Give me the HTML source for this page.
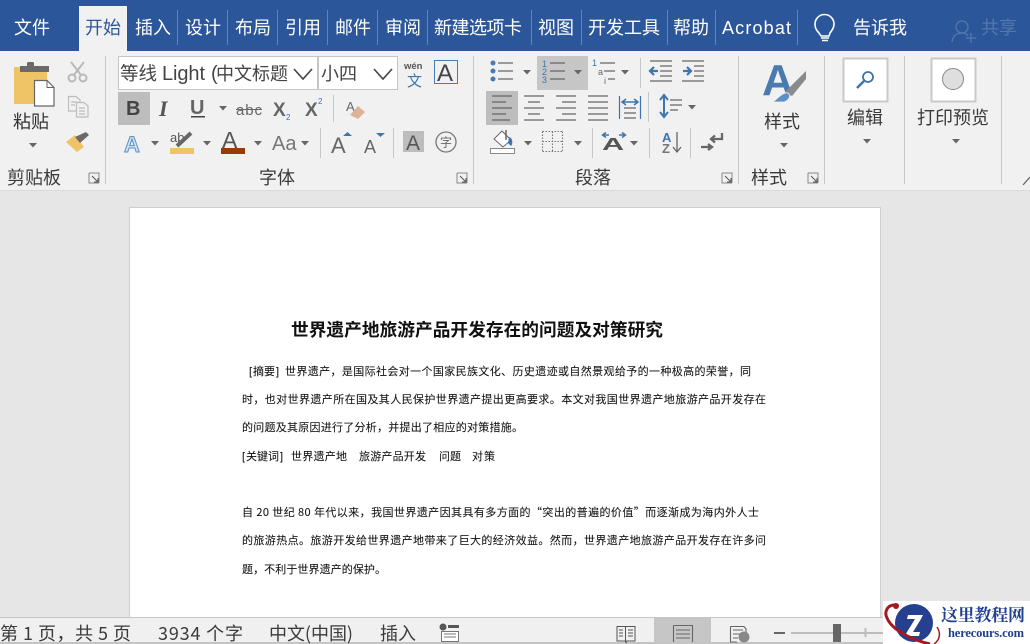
<!DOCTYPE html>
<html lang="zh"><head><meta charset="utf-8"><title>Word</title>
<style>
html,body{margin:0;padding:0;width:1030px;height:644px;overflow:hidden;background:#e6e6e6}
svg{display:block}
text{font-family:"Liberation Sans","Noto Sans CJK SC",sans-serif}
.c{font-family:"Noto Sans CJK SC","Liberation Sans",sans-serif}
.s{font-family:"Liberation Serif","Noto Serif CJK SC",serif;font-weight:700}
.t{fill:#fff;font-size:18px}
.r{fill:#3a3a3a;font-size:18px}
.d{fill:#111;font-size:11px;stroke:#111;stroke-width:.07}
.l{stroke:#666;stroke-width:1.2;fill:none}
.sep{stroke:#c6c6c6;stroke-width:1}
.tsep{stroke:#5f84b8;stroke-width:1}
</style></head><body>
<svg width="1030" height="644" viewBox="0 0 1030 644" xmlns="http://www.w3.org/2000/svg">
<defs>
<path id="ar" d="M-4-2H4L0 2.500Z" fill="#666"/>
<g id="lau"><path d="M0 0H10V10M0 0V10H10" fill="none" stroke="#888" stroke-width="1"/><path d="M3 3L9 9M9 5V9H5" fill="none" stroke="#555" stroke-width="1"/></g>
</defs>
<rect width="1030" height="644" fill="#e6e6e6"/>
<rect width="1030" height="51" fill="#2b579a"/>
<rect y="51" width="1030" height="139" fill="#f1f1f1"/>
<rect y="190" width="1030" height="1" fill="#dadada"/>

<!-- tabs -->
<rect x="79" y="6" width="48" height="45" fill="#f1f1f1"/>
<path class="tsep" d="M177.500 10V45M227.500 10V45M277.500 10V45M327.500 10V45M377.500 10V45M427.500 10V45M531.500 10V45M581.500 10V45M667.500 10V45M715.500 10V45M797.500 10V45"/>
<text class="t c" x="14" y="34">文件</text>
<text class="c" x="85" y="34" font-size="18" fill="#2b579a">开始</text>
<text class="t c" x="135" y="34">插入</text>
<text class="t c" x="185" y="34">设计</text>
<text class="t c" x="235" y="34">布局</text>
<text class="t c" x="285" y="34">引用</text>
<text class="t c" x="335" y="34">邮件</text>
<text class="t c" x="385" y="34">审阅</text>
<text class="t c" x="434" y="34" textLength="88">新建选项卡</text>
<text class="t c" x="538" y="34">视图</text>
<text class="t c" x="588" y="34">开发工具</text>
<text class="t c" x="673" y="34">帮助</text>
<text class="t" x="722" y="34" textLength="69">Acrobat</text>
<text class="t c" x="853" y="34">告诉我</text>
<text class="c" x="981" y="34" font-size="18" fill="#5478ad">共享</text>
<path d="M819 33C815 29 815 26 815 24A9.500 9.500 0 0 1 834 24C834 27 833 29 830 33L829 36H821Z" fill="none" stroke="#fff" stroke-width="1.600"/>
<path d="M821 38H829M822 40.500H828" stroke="#fff" stroke-width="1.600"/>
<g fill="none" stroke="#5478ad" stroke-width="1.300"><circle cx="962" cy="27" r="6"/><path d="M952 42C953 35 957 33 962 33C965 33 967 34 968 36M966 38H976M971 33V43"/></g>

<!-- group separators -->
<path class="sep" d="M105.500 56V184M473.500 56V184M738.500 56V184M824.500 56V184M904.500 56V184M1001.500 56V184M333.500 95V122M320.500 128V158M393.500 128V158M640.500 58V88M648.500 92V122M592.500 128V158M649.500 128V158M690.500 128V158"/>

<!-- clipboard -->
<rect x="14" y="67" width="33" height="37" fill="#efc467"/>
<rect x="20" y="66" width="29" height="6" fill="#6a6a6a"/>
<rect x="27" y="62" width="7" height="5" rx="1.500" fill="#6a6a6a"/>
<path d="M34.500 80.500H47L54 87.500V106H34.500Z" fill="#fff" stroke="#666" stroke-width="1.200"/>
<path d="M47 80.500V87.500H54" fill="none" stroke="#666" stroke-width="1"/>
<text class="c" x="13" y="128" font-size="18" fill="#333">粘贴</text>
<use href="#ar" x="33" y="145"/>
<!-- scissors -->
<g fill="none" stroke="#b9b9b9" stroke-width="2"><circle cx="72" cy="78" r="3.500"/><circle cx="83" cy="78" r="3.500"/><path d="M74 75L84 62M81 75L71 62"/></g>
<!-- copy -->
<g fill="#f1f1f1" stroke="#bdbdbd" stroke-width="1.200"><path d="M68.500 96.500H76L80 100V111H68.500Z"/><path d="M76.500 102.500H84L88 106V117H76.500Z"/><path d="M71 102H77M71 105H75M79 108H85M79 111H85M79 114H85"/></g>
<!-- brush -->
<path d="M66 142L75 135L84 147L77 152Z" fill="#efc467"/>
<path d="M75 137L80 143L89 135L86 132Z" fill="#6a6a6a"/>
<text class="c r" x="7" y="184">剪贴板</text>
<use href="#lau" x="89" y="173"/>

<!-- font boxes -->
<rect x="118.500" y="56.500" width="199" height="33" fill="#fff" stroke="#c6c6c6"/>
<rect x="318.500" y="56.500" width="79" height="33" fill="#fff" stroke="#c6c6c6"/>
<text class="c" x="120" y="80" font-size="18.500" fill="#444">等线</text>
<text x="162" y="80" font-size="20" fill="#444" textLength="43">Light</text>
<text x="211" y="80" font-size="20" fill="#444">(</text>
<text class="c" x="216" y="80" font-size="18" fill="#444">中文标题</text>
<text class="c" x="321" y="80" font-size="18" fill="#444">小四</text>
<path d="M294 69L303 79L312 69M374 69L383 79L392 69" fill="none" stroke="#444" stroke-width="1.600"/>
<text x="404" y="69" font-size="9.500" font-weight="700" fill="#555">wén</text>
<text class="c" x="407" y="86" font-size="15" fill="#3e75ad">文</text>
<rect x="434.500" y="60.500" width="23" height="23" fill="none" stroke="#4a7aae"/>
<text x="437" y="81" font-size="24" fill="#444">A</text>

<!-- font row 2 -->
<rect x="118" y="92" width="32" height="33" fill="#bdbdbd"/>
<text x="126" y="115" font-size="20" font-weight="700" fill="#444">B</text>
<text class="s" x="159" y="116" font-size="22" font-style="italic" fill="#555" style="font-weight:700">I</text>
<text x="190" y="114" font-size="20" font-weight="700" fill="#666">U</text>
<rect x="191" y="116" width="14" height="1.500" fill="#444"/>
<use href="#ar" x="223" y="108"/>
<text x="236" y="115" font-size="15" fill="#666" textLength="26">abc</text>
<rect x="236" y="109" width="26" height="1" fill="#666"/>
<text x="273" y="116" font-size="19" font-weight="700" fill="#666">X</text>
<text x="286" y="120" font-size="8" fill="#3e75ad">2</text>
<text x="305" y="116" font-size="19" font-weight="700" fill="#666">X</text>
<text x="318" y="104" font-size="8" fill="#3e75ad">2</text>
<text x="346" y="111" font-size="13" fill="#666">A</text>
<path d="M350 115L358 106L365 112L358 119Z" fill="#ddb29b"/>

<!-- font row 3 -->
<text x="124" y="152" font-size="22" font-weight="700" fill="#cfe0f0" stroke="#5d91c5" stroke-width="1">A</text>
<use href="#ar" x="155" y="143"/>
<text x="170" y="142" font-size="13" fill="#555">ab</text>
<path d="M177 146L191 133" stroke="#666" stroke-width="4"/>
<rect x="170" y="148" width="24" height="6" fill="#efc467"/>
<use href="#ar" x="207" y="143"/>
<text x="222" y="148" font-size="23" fill="#555">A</text>
<rect x="221" y="148" width="24" height="6" fill="#963c08"/>
<use href="#ar" x="258" y="143"/>
<text x="272" y="150" font-size="20" fill="#777">Aa</text>
<use href="#ar" x="305" y="143"/>
<text x="331" y="153" font-size="22" fill="#666">A</text>
<path d="M343 136L347.500 132L352 136Z" fill="#3e75ad"/>
<text x="364" y="153" font-size="18" fill="#666">A</text>
<path d="M376 133H385L380.500 137Z" fill="#3e75ad"/>
<rect x="403" y="131" width="21" height="21" fill="#bdbdbd"/>
<text x="406" y="150" font-size="21" fill="#555">A</text>
<circle cx="446" cy="142" r="10" fill="none" stroke="#777" stroke-width="1.300"/>
<text class="c" x="440" y="146.500" font-size="12" fill="#666">字</text>
<text class="c r" x="259" y="184">字体</text>
<use href="#lau" x="457" y="173"/>

<!-- paragraph row 1 -->
<rect x="537" y="56" width="51" height="34" fill="#c6c6c6"/>
<g fill="#4a7aae"><circle cx="493" cy="63" r="2.500"/><circle cx="493" cy="71" r="2.500"/><circle cx="493" cy="79" r="2.500"/></g>
<path class="l" d="M498 63H513M498 71H513M498 79H513M550 63H565M550 71H565M550 79H565M600 63H615M604 71H615M608 79H615"/>
<use href="#ar" x="527" y="72"/><use href="#ar" x="578" y="72"/><use href="#ar" x="625" y="72"/>
<g font-size="9" fill="#3e75ad"><text x="542" y="67">1</text><text x="542" y="75">2</text><text x="542" y="83">3</text><text x="592" y="66">1</text></g>
<text x="598" y="75" font-size="9" fill="#666">a</text><text x="604" y="84" font-size="9" fill="#666">i</text>
<path class="l" d="M650 61H672M650 81H672M660 66H672M660 71H672M660 76H672M682 61H704M682 81H704M694 66H704M694 71H704M694 76H704"/>
<path d="M658 71H651M654 67L650 71L654 75" fill="none" stroke="#3e75ad" stroke-width="2.200"/>
<path d="M683 71H691M687 67L691 71L687 75" fill="none" stroke="#3e75ad" stroke-width="2.200"/>

<!-- paragraph row 2 -->
<rect x="486" y="91" width="32" height="34" fill="#bdbdbd"/>
<path class="l" d="M492 96H512M492 102H506M492 108H512M492 114H506M492 120H510M524 96H544M528 102H540M524 108H544M528 114H540M524 120H544M556 96H576M562 102H576M556 108H576M562 114H576M556 120H576M588 96H608M588 102H608M588 108H608M588 114H608M588 120H608M624 108H636M624 113H636M624 118H636M670 100H682M670 105H682M670 110H678"/>
<path d="M619.500 96V119M640.500 96V119" stroke="#3e75ad" stroke-width="1.200"/>
<path d="M623 102H637M626 99L622 102L626 105M634 99L638 102L634 105" fill="none" stroke="#3e75ad" stroke-width="1.500"/>
<path d="M664 96V116M660 100L664 95L668 100M660 112L664 117L668 112" fill="none" stroke="#3e75ad" stroke-width="2"/>
<use href="#ar" x="692" y="107"/>

<!-- paragraph row 3 -->
<path d="M494 139L502 131L511 140L503 147Z" fill="#fff" stroke="#666"/>
<path d="M506 130V140" stroke="#666" stroke-width="1.500"/><path d="M509 137C513 138 513 144 511 146L508 143Z" fill="#3e75ad"/>
<rect x="490.500" y="148.500" width="24" height="5" fill="#fff" stroke="#888"/>
<use href="#ar" x="528" y="143"/>
<path d="M542.500 131.500H563M542.500 151.500H563M542.500 131.500V152M562.500 131.500V152M552.500 131.500V152M542.500 141.500H563" fill="none" stroke="#777" stroke-width="1.100" stroke-dasharray="1.500 1.500"/>
<use href="#ar" x="578" y="143"/>
<text transform="translate(602,150) scale(1.700,1)" x="0" y="0" font-size="18" font-weight="700" fill="#555">A</text>
<path d="M603 135H609M606 132.500L602.500 135L606 137.500M619 135H625M622 132.500L625.500 135L622 137.500" fill="none" stroke="#3e75ad" stroke-width="1.500"/>
<use href="#ar" x="634" y="143"/>
<text x="662" y="142" font-size="13" font-weight="700" fill="#3e75ad">A</text>
<text x="662" y="153" font-size="13" font-weight="700" fill="#777">Z</text>
<path d="M677 132V152M673 147L677 152L681 147" fill="none" stroke="#666" stroke-width="1.300"/>
<path d="M701 147H712M708 144L712 147L708 150" fill="none" stroke="#666" stroke-width="2.300"/>
<path d="M722 133V139H711M715 135.500L711 139L715 142.500" fill="none" stroke="#666" stroke-width="2.300"/>
<text class="c r" x="575" y="184">段落</text>
<use href="#lau" x="722" y="173"/>

<!-- styles -->
<text x="762" y="95" font-size="44" font-weight="700" fill="#4a7aae">A</text>
<path d="M785 92L803 74L806 71L806 79L792 96Z" fill="#8a8a8a"/>
<path d="M773 102C779 97 783 92 788 93C792 96 788 101 784 102Z" fill="#5d91c5" stroke="#f1f1f1" stroke-width=".8"/>
<text class="c r" x="764" y="128">样式</text>
<use href="#ar" x="784" y="145"/>
<text class="c r" x="751" y="184">样式</text>
<use href="#lau" x="808" y="173"/>

<!-- editing -->
<rect x="843.500" y="58.500" width="44" height="43" fill="#fff" stroke="#c9c9c9" stroke-width="2"/>
<circle cx="868" cy="77" r="5" fill="none" stroke="#3e75ad" stroke-width="1.800"/>
<path d="M864 81L857 88" stroke="#3e75ad" stroke-width="2.500"/>
<text class="c r" x="847" y="124">编辑</text>
<use href="#ar" x="867" y="141"/>

<!-- print preview -->
<rect x="931.500" y="58.500" width="44" height="43" fill="#fff" stroke="#c9c9c9" stroke-width="2"/>
<circle cx="953" cy="79" r="10.500" fill="#dedede" stroke="#888" stroke-width="1"/>
<text class="c r" x="917" y="124">打印预览</text>
<use href="#ar" x="956" y="141"/>
<path d="M1023 185L1030 177" stroke="#666" stroke-width="1.300"/>

<!-- page -->
<rect x="129.500" y="207.500" width="751" height="437" fill="#fff" stroke="#cfcfcf"/>
<text class="c" x="291" y="336" font-size="17.700" font-weight="700" fill="#111" textLength="372">世界遗产地旅游产品开发存在的问题及对策研究</text>
<text class="d" x="249" y="375">[</text>
<text class="c d" x="253" y="375" textLength="22">摘要</text>
<text class="d" x="276" y="375">]</text>
<text class="c d" x="285" y="375" textLength="466">世界遗产，是国际社会对一个国家民族文化、历史遗迹或自然景观给予的一种极高的荣誉，同</text>
<text class="c d" x="242" y="403" textLength="524">时，也对世界遗产所在国及其人民保护世界遗产提出更高要求。本文对我国世界遗产地旅游产品开发存在</text>
<text class="c d" x="242" y="431" textLength="281">的问题及其原因进行了分析，并提出了相应的对策措施。</text>
<text class="d" x="242" y="460">[</text>
<text class="c d" x="246" y="460" textLength="33">关键词</text>
<text class="d" x="280" y="460">]</text>
<text class="c d" x="291" y="460" textLength="56">世界遗产地</text>
<text class="c d" x="359" y="460" textLength="67">旅游产品开发</text>
<text class="c d" x="439" y="460" textLength="22">问题</text>
<text class="c d" x="472" y="460" textLength="23">对策</text>
<text class="c d" x="242" y="516" textLength="517">自 20 世纪 80 年代以来，我国世界遗产因其具有多方面的“突出的普遍的价值”而逐渐成为海内外人士</text>
<text class="c d" x="242" y="544" textLength="524">的旅游热点。旅游开发给世界遗产地带来了巨大的经济效益。然而，世界遗产地旅游产品开发存在许多问</text>
<text class="c d" x="242" y="573" textLength="144">题，不利于世界遗产的保护。</text>

<!-- status bar -->
<rect y="617" width="1030" height="27" fill="#f0f0f0"/>
<rect y="617" width="1030" height="1" fill="#c6c6c6"/>
<rect y="642" width="1030" height="2" fill="#c4c4c4"/>
<text class="c r" x="0" y="640" textLength="131">第 1 页，共 5 页</text>
<text class="c r" x="158" y="640" textLength="85">3934 个字</text>
<text class="c r" x="269" y="640" textLength="84">中文(中国)</text>
<text class="c r" x="380" y="640">插入</text>
<circle cx="443" cy="627" r="3.500" fill="#555"/>
<path d="M448 625H459V628H448Z" fill="#555"/>
<path d="M441.500 631.500H458.500V641.500H441.500ZM444 634H456M444 637H456" fill="#fff" stroke="#777" stroke-width="1"/>
<path d="M625.500 626.500H617V641H625.500L626 643L626.500 641H635V626.500H626.500ZM625.500 626.500V641M619 630H623M619 633H623M619 636H623M628 630H633M628 633H633M628 636H633" fill="none" stroke="#555" stroke-width="1"/>
<rect x="654" y="618" width="57" height="24" fill="#c6c6c6"/>
<path d="M673.500 625.500H692.500V642M673.500 625.500V642M676 630H690M676 634H690M676 638H690" fill="none" stroke="#666" stroke-width="1.100"/>
<path d="M730.500 626.500H744L746 629V633M730.500 626.500V642H737M733 630H743M733 634H740M733 638H738" fill="none" stroke="#666" stroke-width="1.100"/>
<circle cx="744" cy="637" r="5.500" fill="#888"/>
<rect x="774" y="632" width="11" height="2" fill="#666"/>
<rect x="791" y="632" width="92" height="2" fill="#bdbdbd"/>
<rect x="864.500" y="628" width="2" height="9" fill="#bdbdbd"/>
<rect x="833" y="624" width="8" height="18" fill="#666"/>

<!-- logo -->
<rect x="883" y="601" width="147" height="43" fill="#fff"/>
<circle cx="914" cy="623" r="19" fill="#26408f"/>
<path d="M908 615H923L921 619L913 632H920L919 636H905L907 632L915 619H907Z" fill="#fff"/>
<path d="M897 605C887 604 884 612 887 618C892 630 912 640 930 644" fill="none" stroke="#a5191e" stroke-width="3"/>
<path d="M937 627C941 633 940 640 934 644" fill="none" stroke="#a5191e" stroke-width="1.500"/>
<circle cx="896" cy="606" r="3" fill="#a5191e"/>
<text class="s" x="941" y="621" font-size="17" fill="#1f3f8f" textLength="84" style="font-family:'Noto Serif CJK SC','Noto Sans CJK SC',serif">这里教程网</text>
<text class="s" x="948" y="637" font-size="12.500" fill="#1f3f8f" textLength="76">herecours.com</text>
</svg>
</body></html>
